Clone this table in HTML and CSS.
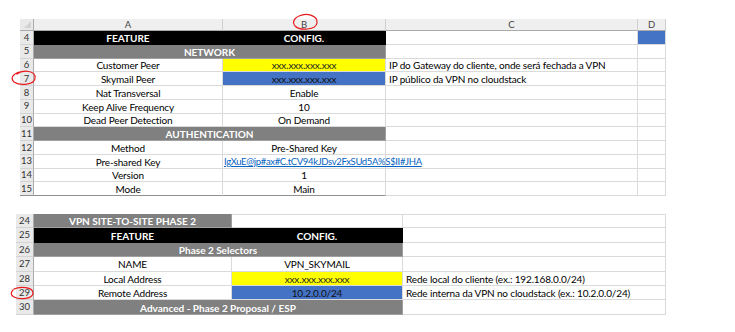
FILE: index.html
```html
<!DOCTYPE html>
<html>
<head>
<meta charset="utf-8">
<link rel="stylesheet" href="styles.css">
</head>
<body>
<div class="page">
  <div class="sheet s1">
    <div class="ch corner"><span class="tri"></span></div><div class="ch">A</div><div class="ch">B</div><div class="ch">C</div><div class="ch">D</div>

    <div class="rn">4</div><div class="c blk">FEATURE</div><div class="c blk">CONFIG.</div><div class="c"></div><div class="c blue"></div>
    <div class="rn">5</div><div class="c gry span2">NETWORK</div><div class="c"></div><div class="c"></div>
    <div class="rn">6</div><div class="c">Customer Peer</div><div class="c yel">xxx.xxx.xxx.xxx</div><div class="c left">IP do Gateway do cliente, onde será fechada a VPN</div><div class="c"></div>
    <div class="rn">7</div><div class="c">Skymail Peer</div><div class="c blue">xxx.xxx.xxx.xxx</div><div class="c left">IP público da VPN no cloudstack</div><div class="c"></div>
    <div class="rn">8</div><div class="c">Nat Transversal</div><div class="c">Enable</div><div class="c"></div><div class="c"></div>
    <div class="rn">9</div><div class="c">Keep Alive Frequency</div><div class="c">10</div><div class="c"></div><div class="c"></div>
    <div class="rn">10</div><div class="c">Dead Peer Detection</div><div class="c">On Demand</div><div class="c"></div><div class="c"></div>
    <div class="rn">11</div><div class="c gry span2">AUTHENTICATION</div><div class="c"></div><div class="c"></div>
    <div class="rn">12</div><div class="c">Method</div><div class="c">Pre-Shared Key</div><div class="c"></div><div class="c"></div>
    <div class="rn">13</div><div class="c">Pre-shared Key</div><div class="c left over"><a class="lnk">IgXuE@jp#ax#C.tCV94kJDsv2FxSUd5A%S$II#JHA</a></div><div class="c"></div><div class="c"></div>
    <div class="rn">14</div><div class="c">Version</div><div class="c">1</div><div class="c"></div><div class="c"></div>
    <div class="rn last">15</div><div class="c last">Mode</div><div class="c last">Main</div><div class="c"></div><div class="c"></div>
  </div>

  <div class="sheet s2">
    <div class="rn">24</div><div class="c gry">VPN SITE-TO-SITE PHASE 2</div><div class="c top"></div><div class="c top"></div>
    <div class="rn">25</div><div class="c blk">FEATURE</div><div class="c blk">CONFIG.</div><div class="c"></div>
    <div class="rn">26</div><div class="c gry span2">Phase 2 Selectors</div><div class="c"></div>
    <div class="rn">27</div><div class="c">NAME</div><div class="c">VPN_SKYMAIL</div><div class="c"></div>
    <div class="rn">28</div><div class="c">Local Address</div><div class="c yel">xxx.xxx.xxx.xxx</div><div class="c left">Rede local do cliente (ex.: 192.168.0.0/24)</div>
    <div class="rn">29</div><div class="c">Remote Address</div><div class="c blue">10.2.0.0/24</div><div class="c left">Rede interna da VPN no cloudstack (ex.: 10.2.0.0/24)</div>
    <div class="rn">30</div><div class="c gry span2">Advanced - Phase 2 Proposal / ESP</div><div class="c"></div>
  </div>

  <svg class="marks" width="735" height="332" viewBox="0 0 735 332">
    <path d="M299 16 C 307 12, 318 16, 317 23 C 316 30, 300 31, 295 26 C 291 21, 296 16, 303 15"/>
    <path d="M17 74 C 23 69, 36 71, 35 78 C 35 85, 20 86, 14 82 C 10 78, 13 74, 19 72"/>
    <path d="M14 289 C 20 286, 33 287, 33 293 C 33 299, 20 300, 14 297 C 10 295, 11 292, 13 290"/>
  </svg>
</div>
</body>
</html>
```

FILE: styles.css
```css
* { box-sizing: border-box; }
html, body { margin: 0; padding: 0; background: #fff; }
body {
  font-family: Lato, "Open Sans", "Liberation Sans", sans-serif;
  font-size: 10px;
  color: #000;
}
.page {
  position: relative;
  width: 735px;
  height: 332px;
  overflow: hidden;
  padding-top: 19px;
}
.sheet { display: grid; }
.s1 {
  margin-left: 20px;
  grid-template-columns: 14px 189px 163px 252px 28px;
  grid-template-rows: 12px repeat(12, 13.75px);
  width: 646px;
}
.s2 {
  margin-top: 18px;
  margin-left: 16px;
  grid-template-columns: 18px 198px 171px 263px;
  grid-template-rows: repeat(7, 14.4px);
  width: 650px;
}
.ch {
  background: #efefef;
  border-right: 1px solid #d0d0d0;
  border-bottom: 1px solid #ababab;
  color: #444;
  font-size: 9.5px;
  display: flex;
  align-items: center;
  justify-content: center;
  line-height: 1;
}
.corner { position: relative; background: #e9e9e9; border-right-color: #ababab; }
.tri {
  position: absolute;
  right: 2px;
  bottom: 2px;
  width: 0;
  height: 0;
  border-left: 7px solid transparent;
  border-bottom: 7px solid #d2d2d2;
}
.rn {
  background: #e9e9e9;
  border-right: 1px solid #ababab;
  border-bottom: 1px solid #d3d3d3;
  color: #333;
  font-size: 9.5px;
  display: flex;
  align-items: center;
  justify-content: center;
  line-height: 1;
}
.c {
  border-right: 1px solid #dadada;
  border-bottom: 1px solid #dadada;
  display: flex;
  align-items: center;
  justify-content: center;
  white-space: nowrap;
  line-height: 1;
  padding-top: 1px;
  min-width: 0;
  letter-spacing: -0.15px;
}
.top { border-top: 1px solid #dadada; }
.left { justify-content: flex-start; padding-left: 3px; }
.over { overflow: visible; position: relative; z-index: 1; padding-left: 1px; }
.span2 { grid-column: span 2; }
.blk { background: #000; color: #fff; font-weight: 700; border-color: #000; letter-spacing: 0; }
.gry { background: #808080; color: #fff; font-weight: 700; border-color: #a0a0a0; letter-spacing: 0; }
.yel { background: #ffff00; color: #222; }
.blue { background: #4472c4; color: #111; }
.lnk { color: #0563c1; text-decoration: underline; font-size: 9.5px; letter-spacing: -0.35px; }
.last { border-bottom: 1.5px solid #8f8f8f; }
.s1 .rn.last { border-bottom: 1.5px solid #8f8f8f; }
.marks {
  position: absolute;
  left: 0;
  top: 0;
  pointer-events: none;
}
.marks path {
  fill: none;
  stroke: #e8191c;
  stroke-width: 1.2;
  stroke-linecap: round;
}
```
